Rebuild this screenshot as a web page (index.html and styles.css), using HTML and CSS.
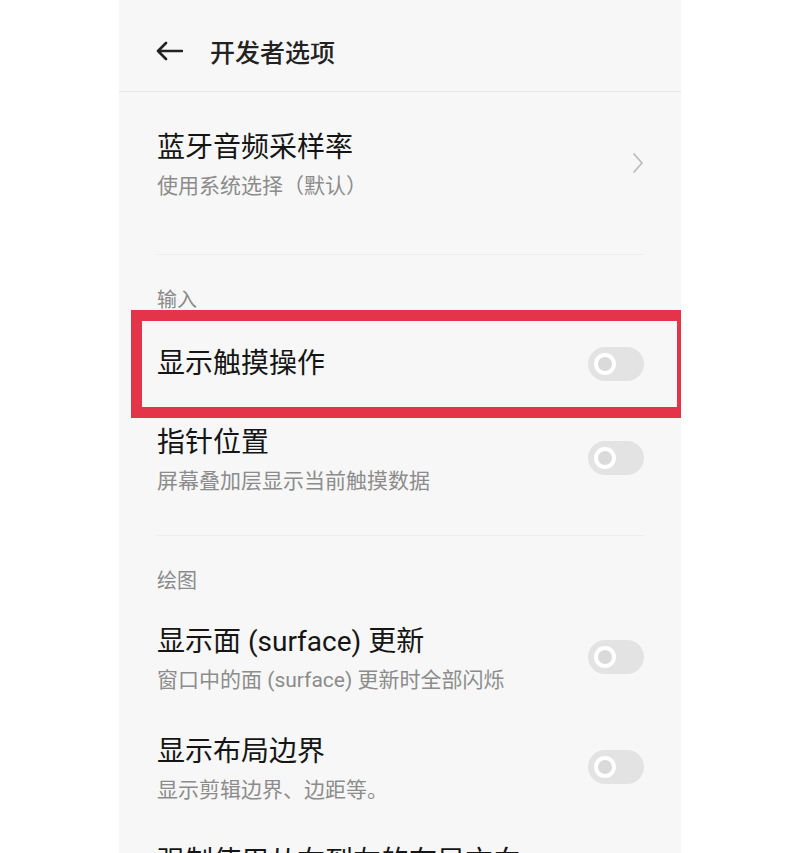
FILE: index.html
```html
<!DOCTYPE html>
<html lang="zh-CN">
  <head>
    <meta charset="UTF-8" />
    <meta name="viewport" content="width=device-width, initial-scale=1.0" />
    <title>开发者选项</title>
    <link rel="stylesheet" href="styles.css">
  </head>
  <body>
    <div class="phone">
      <header class="topbar">
        <svg class="back" width="28" height="20" viewBox="0 0 28 20">
          <path d="M27 10H3M11 2L3 10l8 8" fill="none" stroke="#222" stroke-width="2.6" stroke-linecap="round" stroke-linejoin="round" />
        </svg>
        <h1>开发者选项</h1>
      </header>

      <div class="content">
        <section class="group first">
          <div class="item">
            <div class="text">
              <div class="title">蓝牙音频采样率</div>
              <div class="sub">使用系统选择（默认）</div>
            </div>
            <svg class="chevron" width="12" height="22" viewBox="0 0 12 22">
              <path d="M2 2l8 9-8 9" fill="none" stroke="#bdbdbd" stroke-width="1.8" stroke-linecap="round" stroke-linejoin="round" />
            </svg>
          </div>
        </section>

        <section class="group">
          <div class="label">输入</div>
          <div class="item single marked">
            <div class="text">
              <div class="title">显示触摸操作</div>
            </div>
            <span class="toggle"></span>
          </div>
          <div class="item">
            <div class="text">
              <div class="title">指针位置</div>
              <div class="sub">屏幕叠加层显示当前触摸数据</div>
            </div>
            <span class="toggle"></span>
          </div>
        </section>

        <section class="group last">
          <div class="label">绘图</div>
          <div class="item">
            <div class="text">
              <div class="title">显示面 (surface) 更新</div>
              <div class="sub">窗口中的面 (surface) 更新时全部闪烁</div>
            </div>
            <span class="toggle"></span>
          </div>
          <div class="item">
            <div class="text">
              <div class="title">显示布局边界</div>
              <div class="sub">显示剪辑边界、边距等。</div>
            </div>
            <span class="toggle"></span>
          </div>
          <div class="item">
            <div class="text">
              <div class="title">强制使用从右到左的布局方向</div>
            </div>
          </div>
        </section>
      </div>
    </div>
  </body>
</html>
```

FILE: styles.css
```css
*,
*::before,
*::after {
  box-sizing: border-box;
}

html,
body {
  overflow: hidden;
}

body {
  margin: 0;
  background: #fff;
  font-family: Roboto, 'Noto Sans CJK SC', sans-serif;
  color: #151515;
}

.phone {
  width: 562px;
  height: 100vh;
  margin: 0 auto;
  background: #f7f7f7;
  overflow: hidden;
}

.topbar {
  height: 92px;
  display: flex;
  align-items: center;
  gap: 27px;
  padding: 10px 0 0 36px;
  border-bottom: 1px solid #e6e6e6;
}
.topbar h1 {
  margin: 0;
  font-size: 25px;
  font-weight: 500;
  color: #222;
}
.back {
  display: block;
}

.content {
  padding: 0 37px 0 38px;
}

.group {
  border-bottom: 1px solid #ededed;
  padding-bottom: 19px;
}
.group.first {
  padding: 19px 0 33px;
}
.group.last {
  border-bottom: none;
}

.label {
  padding-top: 30px;
  padding-bottom: 9px;
  font-size: 20px;
  line-height: 30px;
  color: #8a8a8a;
}

.item {
  display: flex;
  align-items: center;
  justify-content: space-between;
  padding: 17px 0;
}
.item.single {
  padding: 20px 0 22px;
}

.title {
  font-size: 28px;
  line-height: 40px;
  white-space: nowrap;
}
.sub {
  font-size: 21px;
  line-height: 36px;
  color: #8c8c8c;
  white-space: nowrap;
}

.chevron {
  flex: none;
  margin-top: -6px;
}

.toggle {
  flex: none;
  position: relative;
  width: 56px;
  height: 34px;
  margin-bottom: 6px;
  border-radius: 17px;
  background: #e3e3e3;
}
.single .toggle {
  margin-bottom: 0;
}
.toggle::before {
  content: '';
  position: absolute;
  left: 6px;
  top: 6px;
  width: 22px;
  height: 22px;
  border-radius: 50%;
  border: 4px solid #fff;
  background: #dadada;
}

/* red annotation frame */
.marked {
  position: relative;
}
.marked::after {
  content: '';
  position: absolute;
  top: -14px;
  bottom: -12px;
  left: -26px;
  right: -37px;
  border: 11px solid #e3344a;
  border-right-width: 4px;
}
```
